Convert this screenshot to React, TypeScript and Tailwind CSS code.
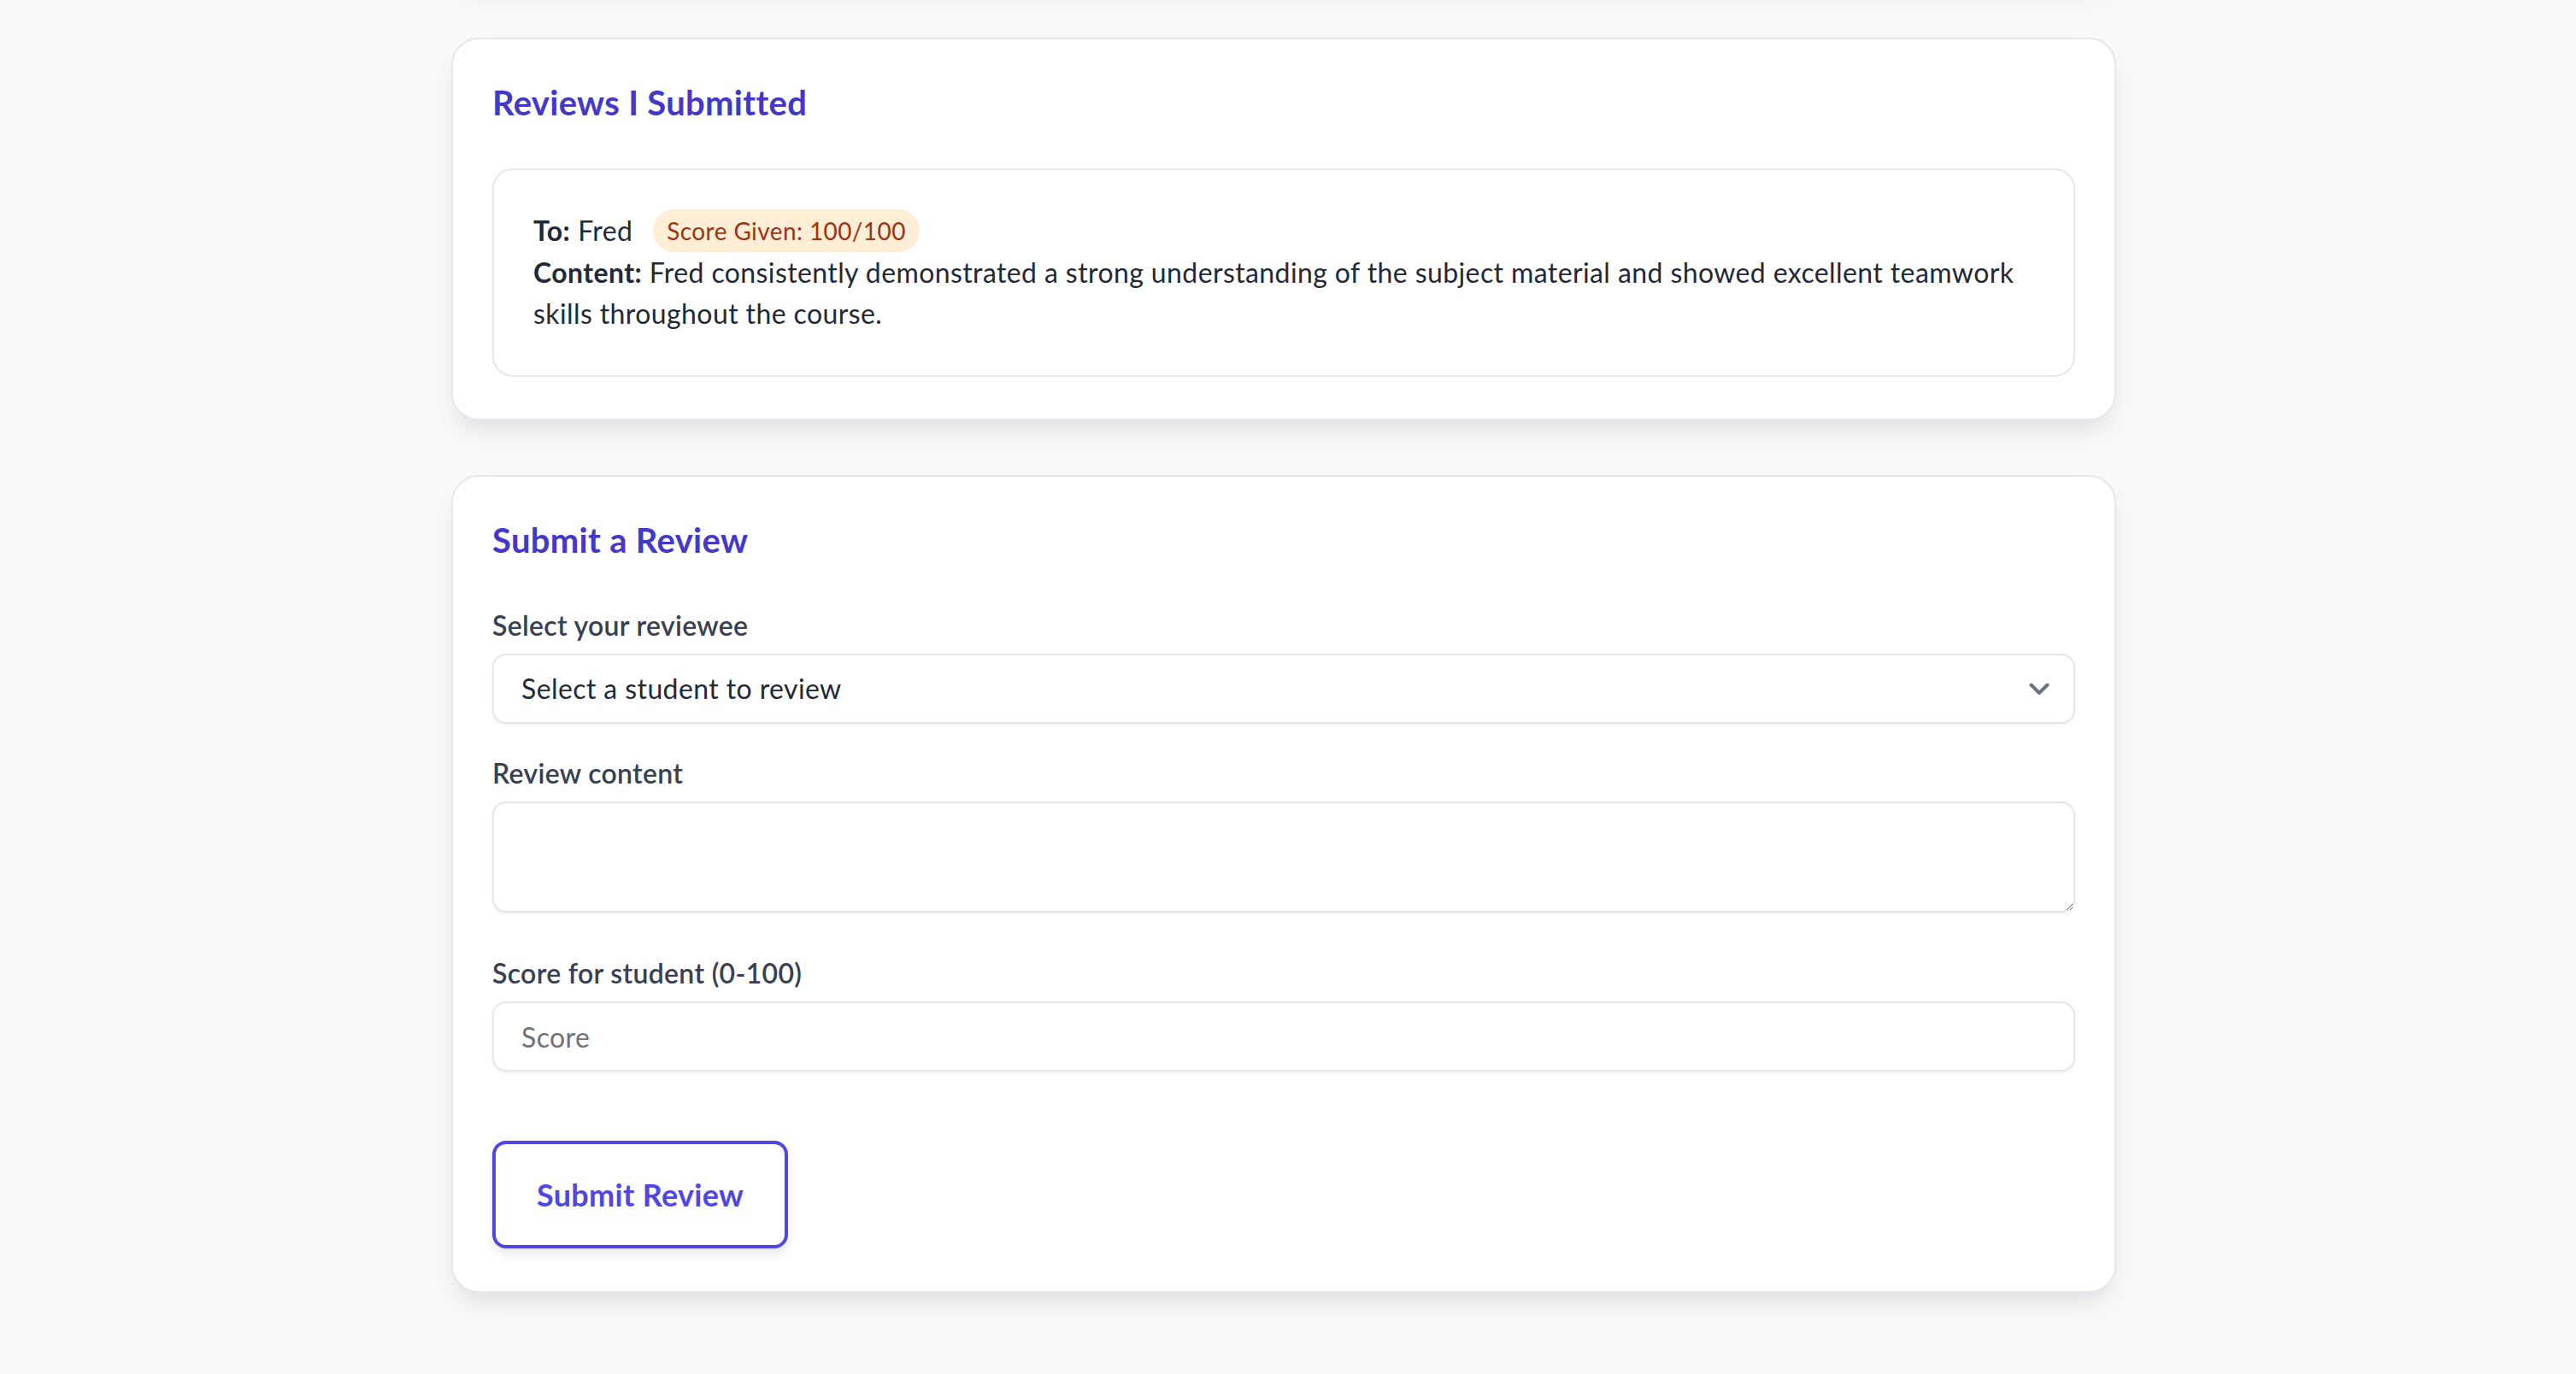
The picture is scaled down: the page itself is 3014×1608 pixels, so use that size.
import { useState } from 'react';

const font = "font-['Lato','Inter','Liberation_Sans',sans-serif]";

function Field({ label, children, className = '' }: { label: string; children: React.ReactNode; className?: string }) {
  return (
    <div className={className}>
      <label className="block text-[32px] leading-[48px] font-semibold tracking-[0.3px] text-[#374151] mb-[9px]">{label}</label>
      {children}
    </div>
  );
}

export default function App() {
  const [content, setContent] = useState('');
  const [score, setScore] = useState('');

  return (
    <div className={`min-h-screen bg-[#f8f9fb] text-[#1f2937] pr-[10px] ${font}`}>
      <div className="mx-auto w-[1948px] flex flex-col gap-[64px] pb-[100px]">
        {/* tail of the card above, scrolled out of view */}
        <div className="h-[100px] -mt-[120px] rounded-[32px] border-2 border-[#e5e7eb] bg-white shadow-[0_16px_30px_-8px_rgba(0,0,0,0.12)]" />

        <section className="rounded-[32px] border-2 border-[#e5e7eb] bg-white px-[46px] pt-[46px] pb-[49px] shadow-[0_16px_30px_-8px_rgba(0,0,0,0.12)]">
          <h2 className="text-[40px] leading-[56px] font-bold tracking-[0.3px] text-[#4338ca] mb-[49px]">Reviews I Submitted</h2>
          <div className="rounded-[24px] border-2 border-[#e5e7eb] px-[46px] pt-[46px] pb-[48px] tracking-[0.4px]">
            <div className="flex items-center h-[50px] text-[32px]">
              <span className="font-bold">To:</span>
              <span className="ml-[9px]">Fred</span>
              <span className="ml-[24px] h-[50px] px-[16px] flex items-center rounded-full bg-[#ffedd5] text-[#9a3412] text-[28px]">
                Score Given: 100/100
              </span>
            </div>
            <p className="text-[32px] leading-[48px]">
              <span className="font-bold">Content:</span> Fred consistently demonstrated a strong understanding of the subject material and showed excellent teamwork skills throughout the course.
            </p>
          </div>
        </section>

        <section className="rounded-[32px] border-2 border-[#e5e7eb] bg-white px-[46px] pt-[46px] pb-[50px] shadow-[0_16px_30px_-8px_rgba(0,0,0,0.12)]">
          <h2 className="text-[40px] leading-[56px] font-bold tracking-[0.3px] text-[#4338ca] mb-[48px]">Submit a Review</h2>

          <Field label="Select your reviewee">
            <button
              type="button"
              className="w-full h-[82px] flex items-center justify-between rounded-[16px] border-2 border-[#e2e5ea] bg-white pl-[32px] pr-[28px] text-[32px] tracking-[0.4px] text-[#1f2937] shadow-[0_2px_4px_rgba(0,0,0,0.05)]"
            >
              <span>Select a student to review</span>
              <svg width="24" height="15" viewBox="0 0 24 15" fill="none" stroke="#6b7280" strokeWidth="4" strokeLinecap="round" strokeLinejoin="round">
                <path d="M2.5 2.5 L12 12 L21.5 2.5" />
              </svg>
            </button>
          </Field>

          <Field label="Review content" className="mt-[34px]">
            <textarea
              rows={2}
              value={content}
              onChange={(e) => setContent(e.target.value)}
              className="block w-full h-[130px] rounded-[16px] border-2 border-[#e2e5ea] bg-white px-[32px] py-[16px] text-[32px] leading-[48px] shadow-[0_2px_4px_rgba(0,0,0,0.05)] outline-none"
            />
          </Field>

          <Field label="Score for student (0-100)" className="mt-[47px]">
            <input
              type="number"
              placeholder="Score"
              value={score}
              onChange={(e) => setScore(e.target.value)}
              className="block w-full h-[82px] rounded-[16px] border-2 border-[#e2e5ea] bg-white px-[32px] text-[32px] tracking-[0.4px] placeholder:text-[#71717a] shadow-[0_2px_4px_rgba(0,0,0,0.05)] outline-none"
            />
          </Field>

          <button
            type="button"
            className="mt-[81px] rounded-[16px] border-4 border-[#4f46e5] bg-white px-[48px] py-[31px] text-[36px] leading-[56px] font-bold tracking-[0.3px] text-[#4f46e5] shadow-[0_6px_12px_rgba(0,0,0,0.1)]"
          >
            Submit Review
          </button>
        </section>
      </div>
    </div>
  );
}
